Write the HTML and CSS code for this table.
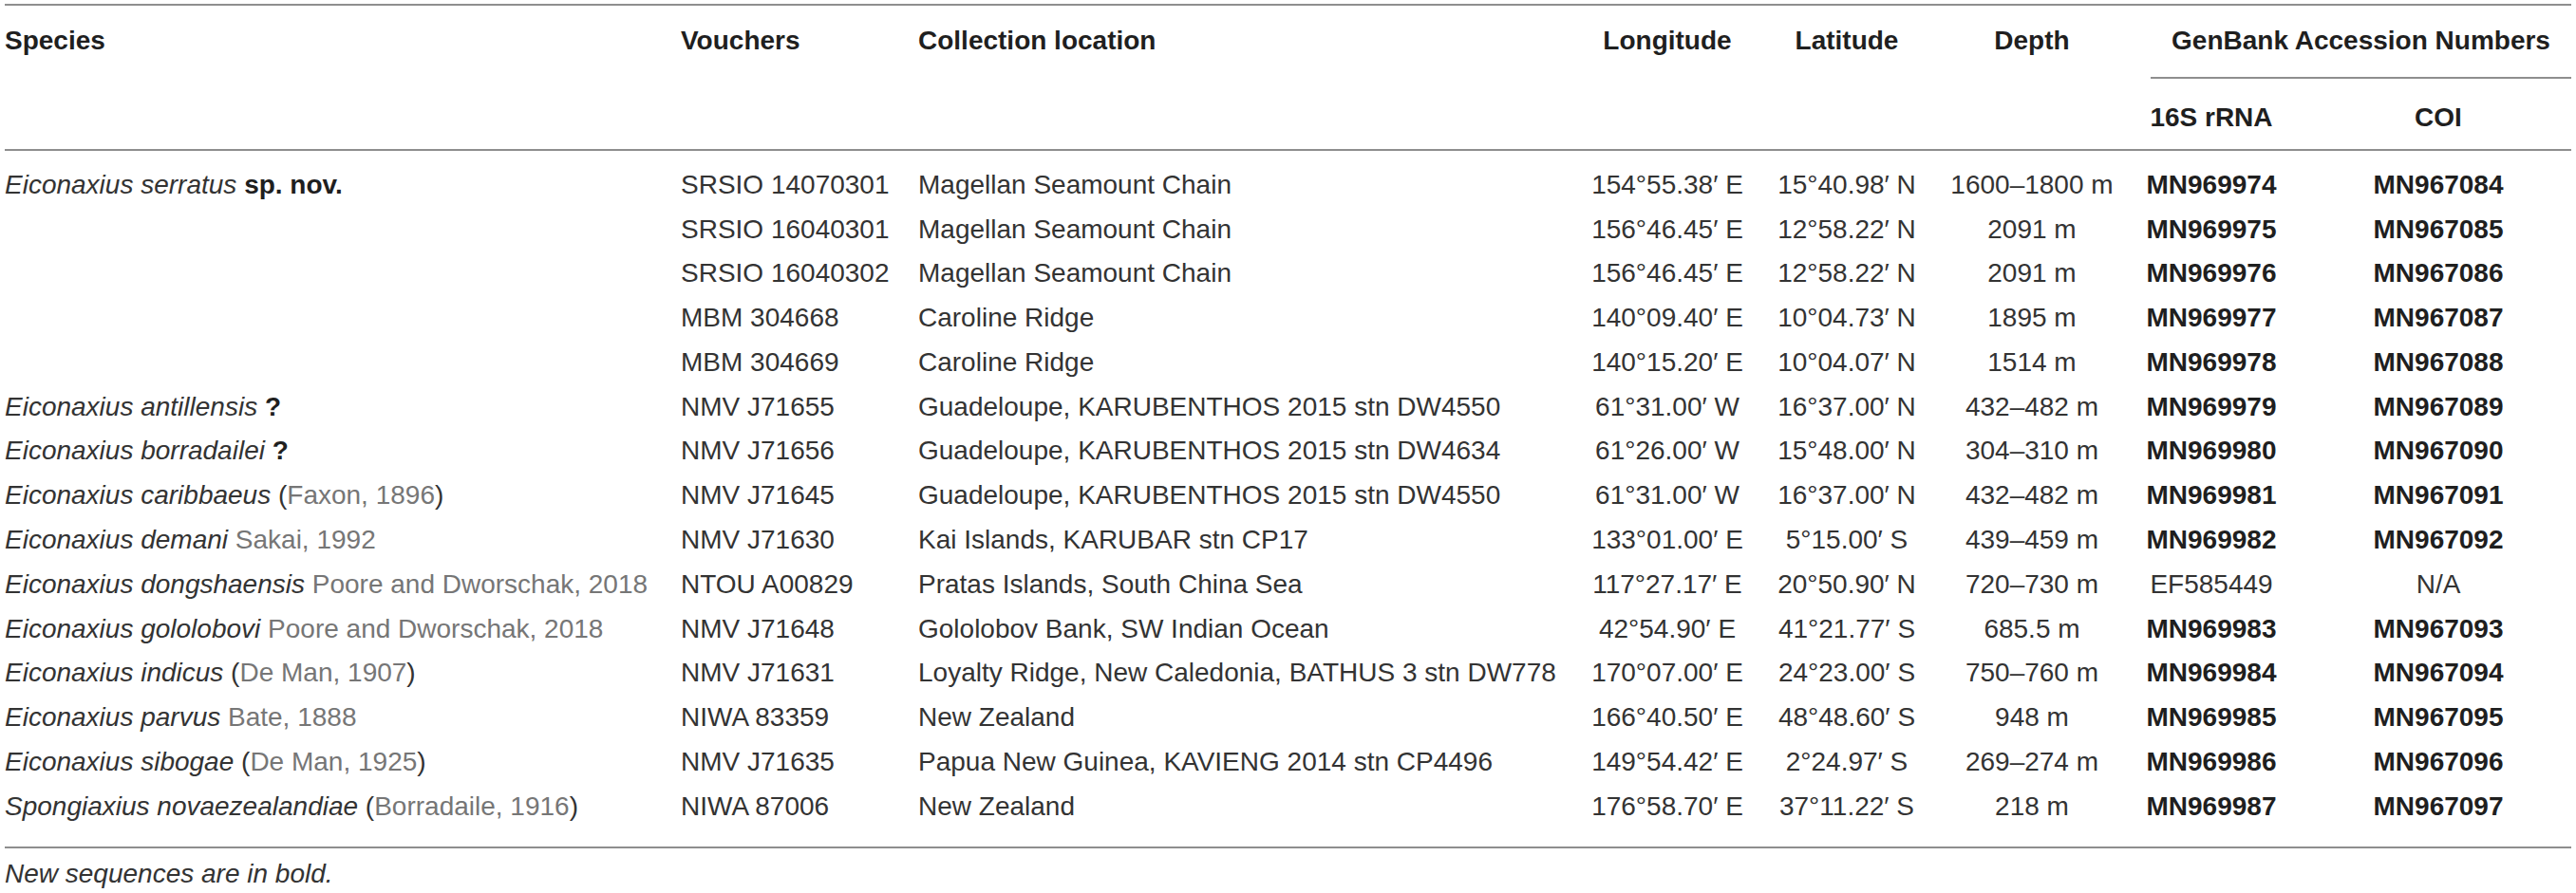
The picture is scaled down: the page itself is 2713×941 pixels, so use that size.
FILE: index.html
```html
<!DOCTYPE html>
<html lang="en">
<head>
<meta charset="utf-8">
<title>Specimens and GenBank accession numbers</title>
<link rel="stylesheet" href="styles.css">
</head>
<body>
<div class="page">
  <table class="data">
    <colgroup>
      <col class="c-species">
      <col class="c-voucher">
      <col class="c-loc">
      <col class="c-lon">
      <col class="c-lat">
      <col class="c-depth">
      <col class="c-16s">
      <col class="c-coi">
    </colgroup>
    <thead>
      <tr>
        <th class="left" rowspan="2">Species</th>
        <th class="left" rowspan="2">Vouchers</th>
        <th class="left" rowspan="2">Collection location</th>
        <th rowspan="2">Longitude</th>
        <th rowspan="2">Latitude</th>
        <th rowspan="2">Depth</th>
        <th class="group" colspan="2"><div class="group-label">GenBank Accession Numbers</div></th>
      </tr>
      <tr>
        <th class="sub">16S rRNA</th>
        <th class="sub">COI</th>
      </tr>
    </thead>
    <tbody>
      <tr>
        <td class="left"><i>Eiconaxius serratus</i> <b>sp. nov.</b></td>
        <td class="left">SRSIO 14070301</td>
        <td class="left">Magellan Seamount Chain</td>
        <td>154°55.38′ E</td><td>15°40.98′ N</td><td>1600–1800 m</td>
        <td class="acc">MN969974</td><td class="acc">MN967084</td>
      </tr>
      <tr>
        <td class="left"></td>
        <td class="left">SRSIO 16040301</td>
        <td class="left">Magellan Seamount Chain</td>
        <td>156°46.45′ E</td><td>12°58.22′ N</td><td>2091 m</td>
        <td class="acc">MN969975</td><td class="acc">MN967085</td>
      </tr>
      <tr>
        <td class="left"></td>
        <td class="left">SRSIO 16040302</td>
        <td class="left">Magellan Seamount Chain</td>
        <td>156°46.45′ E</td><td>12°58.22′ N</td><td>2091 m</td>
        <td class="acc">MN969976</td><td class="acc">MN967086</td>
      </tr>
      <tr>
        <td class="left"></td>
        <td class="left">MBM 304668</td>
        <td class="left">Caroline Ridge</td>
        <td>140°09.40′ E</td><td>10°04.73′ N</td><td>1895 m</td>
        <td class="acc">MN969977</td><td class="acc">MN967087</td>
      </tr>
      <tr>
        <td class="left"></td>
        <td class="left">MBM 304669</td>
        <td class="left">Caroline Ridge</td>
        <td>140°15.20′ E</td><td>10°04.07′ N</td><td>1514 m</td>
        <td class="acc">MN969978</td><td class="acc">MN967088</td>
      </tr>
      <tr>
        <td class="left"><i>Eiconaxius antillensis</i> <b>?</b></td>
        <td class="left">NMV J71655</td>
        <td class="left">Guadeloupe, KARUBENTHOS 2015 stn DW4550</td>
        <td>61°31.00′ W</td><td>16°37.00′ N</td><td>432–482 m</td>
        <td class="acc">MN969979</td><td class="acc">MN967089</td>
      </tr>
      <tr>
        <td class="left"><i>Eiconaxius borradailei</i> <b>?</b></td>
        <td class="left">NMV J71656</td>
        <td class="left">Guadeloupe, KARUBENTHOS 2015 stn DW4634</td>
        <td>61°26.00′ W</td><td>15°48.00′ N</td><td>304–310 m</td>
        <td class="acc">MN969980</td><td class="acc">MN967090</td>
      </tr>
      <tr>
        <td class="left"><i>Eiconaxius caribbaeus</i> (<span class="auth">Faxon, 1896</span>)</td>
        <td class="left">NMV J71645</td>
        <td class="left">Guadeloupe, KARUBENTHOS 2015 stn DW4550</td>
        <td>61°31.00′ W</td><td>16°37.00′ N</td><td>432–482 m</td>
        <td class="acc">MN969981</td><td class="acc">MN967091</td>
      </tr>
      <tr>
        <td class="left"><i>Eiconaxius demani</i> <span class="auth">Sakai, 1992</span></td>
        <td class="left">NMV J71630</td>
        <td class="left">Kai Islands, KARUBAR stn CP17</td>
        <td>133°01.00′ E</td><td>5°15.00′ S</td><td>439–459 m</td>
        <td class="acc">MN969982</td><td class="acc">MN967092</td>
      </tr>
      <tr>
        <td class="left"><i>Eiconaxius dongshaensis</i> <span class="auth">Poore and Dworschak, 2018</span></td>
        <td class="left">NTOU A00829</td>
        <td class="left">Pratas Islands, South China Sea</td>
        <td>117°27.17′ E</td><td>20°50.90′ N</td><td>720–730 m</td>
        <td>EF585449</td><td>N/A</td>
      </tr>
      <tr>
        <td class="left"><i>Eiconaxius gololobovi</i> <span class="auth">Poore and Dworschak, 2018</span></td>
        <td class="left">NMV J71648</td>
        <td class="left">Gololobov Bank, SW Indian Ocean</td>
        <td>42°54.90′ E</td><td>41°21.77′ S</td><td>685.5 m</td>
        <td class="acc">MN969983</td><td class="acc">MN967093</td>
      </tr>
      <tr>
        <td class="left"><i>Eiconaxius indicus</i> (<span class="auth">De Man, 1907</span>)</td>
        <td class="left">NMV J71631</td>
        <td class="left">Loyalty Ridge, New Caledonia, BATHUS 3 stn DW778</td>
        <td>170°07.00′ E</td><td>24°23.00′ S</td><td>750–760 m</td>
        <td class="acc">MN969984</td><td class="acc">MN967094</td>
      </tr>
      <tr>
        <td class="left"><i>Eiconaxius parvus</i> <span class="auth">Bate, 1888</span></td>
        <td class="left">NIWA 83359</td>
        <td class="left">New Zealand</td>
        <td>166°40.50′ E</td><td>48°48.60′ S</td><td>948 m</td>
        <td class="acc">MN969985</td><td class="acc">MN967095</td>
      </tr>
      <tr>
        <td class="left"><i>Eiconaxius sibogae</i> (<span class="auth">De Man, 1925</span>)</td>
        <td class="left">NMV J71635</td>
        <td class="left">Papua New Guinea, KAVIENG 2014 stn CP4496</td>
        <td>149°54.42′ E</td><td>2°24.97′ S</td><td>269–274 m</td>
        <td class="acc">MN969986</td><td class="acc">MN967096</td>
      </tr>
      <tr>
        <td class="left"><i>Spongiaxius novaezealandiae</i> (<span class="auth">Borradaile, 1916</span>)</td>
        <td class="left">NIWA 87006</td>
        <td class="left">New Zealand</td>
        <td>176°58.70′ E</td><td>37°11.22′ S</td><td>218 m</td>
        <td class="acc">MN969987</td><td class="acc">MN967097</td>
      </tr>
    </tbody>
  </table>
  <p class="note">New sequences are in bold.</p>
</div>
</body>
</html>
```

FILE: styles.css
```css
html, body {
  margin: 0;
  padding: 0;
  background: #ffffff;
}

.page {
  padding: 4px 0 0 5px;
  font-family: "Liberation Sans", Arial, Helvetica, sans-serif;
  font-size: 28px;
  line-height: 32px;
  color: #333333;
}

.data {
  width: 2703px;
  table-layout: fixed;
  border-collapse: separate;
  border-spacing: 0;
  border-top: 2px solid #8e8e8e;
  border-bottom: 2px solid #8e8e8e;
}

.c-species { width: 712px; }
.c-voucher { width: 250px; }
.c-loc { width: 705px; }
.c-lon { width: 168px; }
.c-lat { width: 210px; }
.c-depth { width: 180px; }
.c-16s { width: 198px; }
.c-coi { width: 280px; }

th, td {
  padding: 0;
  white-space: nowrap;
  text-align: center;
  vertical-align: top;
}

.left {
  text-align: left;
}

th {
  font-weight: bold;
  color: #1f1f1f;
  padding-top: 20.8px;
  border-bottom: 2px solid #8e8e8e;
}

th.group {
  border-bottom: none;
  padding-top: 0;
}

.group-label {
  margin-left: 35px;
  padding-top: 20.8px;
  padding-bottom: 22.2px;
  border-bottom: 2px solid #8e8e8e;
  text-align: center;
}

th.sub {
  padding-top: 24.8px;
  padding-bottom: 17.2px;
}

td {
  padding-top: 7.4px;
  padding-bottom: 7.4px;
}

tbody tr:first-child td {
  padding-top: 19.8px;
}

tbody tr:last-child td {
  padding-bottom: 26px;
}

td i {
  font-style: italic;
}

td b {
  font-weight: bold;
  color: #1f1f1f;
}

.auth {
  color: #767676;
}

td.acc {
  font-weight: bold;
  color: #1f1f1f;
}

.note {
  margin: 11px 0 0 0;
  font-style: italic;
  color: #333333;
}
```
